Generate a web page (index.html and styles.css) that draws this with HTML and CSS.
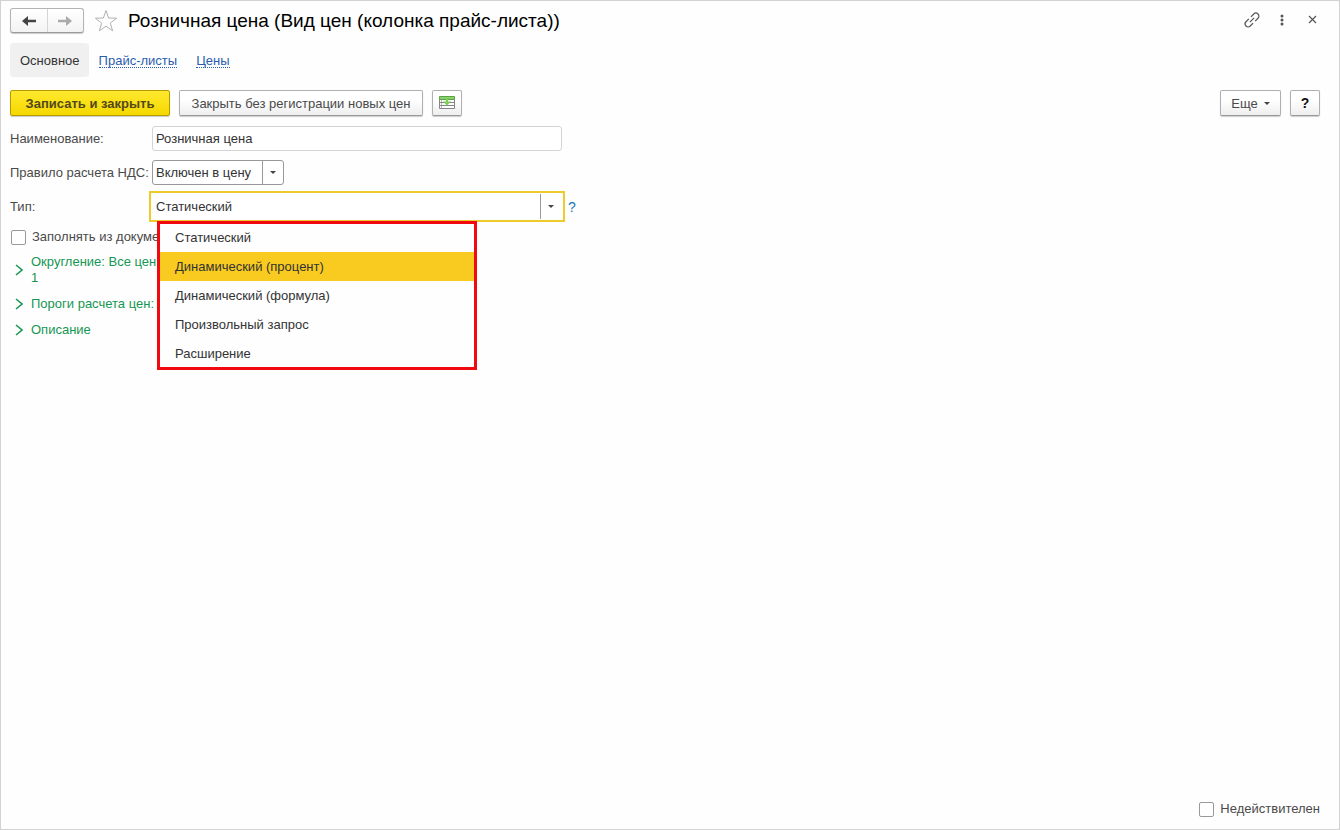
FILE: index.html
```html
<!DOCTYPE html>
<html lang="ru">
<head>
    <meta charset="UTF-8">
    <meta name="viewport" content="width=device-width, initial-scale=1.0">
    <title>Розничная цена (Вид цен (колонка прайс-листа))</title>
    <link rel="stylesheet" href="styles.css">
</head>
<body>
    <header class="titlebar">
        <div class="history">
            <button type="button" aria-label="Назад">
                <svg width="16" height="12" viewBox="0 0 16 12"><path d="M1 6l6-5v3.700h8v2.600H7V11z" fill="#444"/></svg>
            </button>
            <button type="button" aria-label="Вперед">
                <svg width="16" height="12" viewBox="0 0 16 12"><path d="M15 6L9 1v3.700H1v2.600h8V11z" fill="#aaa"/></svg>
            </button>
        </div>
        <button type="button" class="icon-button star" aria-label="Избранное">
            <svg width="24" height="23" viewBox="0 0 24 23"><path d="M12 1.500L14.600 9l8 .2-6.300 4.900 2.300 7.700-6.600-4.600-6.600 4.600 2.300-7.700L1.400 9.200l8-.2z" fill="none" stroke="#b0b0b0"/></svg>
        </button>
        <h1>Розничная цена (Вид цен (колонка прайс-листа))</h1>
        <div class="window-tools">
            <button type="button" class="icon-button" aria-label="Ссылка">
                <svg width="18" height="18" viewBox="-9 -9 18 18"><path transform="rotate(-45)" d="M-1.500-3H-5.500a3 3 0 0 0 0 6H-1.500M1.500-3H5.500a3 3 0 0 1 0 6H1.500M-3 0H3" fill="none" stroke="#555" stroke-width="1.200"/></svg>
            </button>
            <button type="button" class="icon-button" aria-label="Меню">
                <svg width="4" height="12" viewBox="0 0 4 12" fill="#555"><circle cx="2" cy="2" r="1.500"/><circle cx="2" cy="6" r="1.500"/><circle cx="2" cy="10" r="1.500"/></svg>
            </button>
            <button type="button" class="icon-button" aria-label="Закрыть">
                <svg width="9" height="9" viewBox="0 0 9 9"><path d="M1 1l7 7M8 1L1 8" stroke="#555" stroke-width="1.200"/></svg>
            </button>
        </div>
    </header>

    <nav class="tabs">
        <a href="#" class="current">Основное</a>
        <a href="#"><span>Прайс-листы</span></a>
        <a href="#"><span>Цены</span></a>
    </nav>

    <div class="toolbar">
        <button type="button" class="btn primary">Записать и закрыть</button>
        <button type="button" class="btn wide">Закрыть без регистрации новых цен</button>
        <button type="button" class="btn square" aria-label="Загрузить цены">
            <svg width="16" height="14" viewBox="0 0 16 14">
                <path d="M.5 3.500v9h15v-9M.5 6.500h15M.5 9.500h15" fill="#fff" stroke="#858585"/>
                <path d="M.5.5h15v3H.5z" fill="#8ccf6c" stroke="#5aa548"/>
                <path d="M2 5h1M2 8h1M2 11h1" stroke="#777"/>
                <path d="M7 2h2v3.500h3L8 9.500 4 5.500h3z" fill="#7bcf52"/>
            </svg>
        </button>
        <button type="button" class="btn more">Еще
            <svg width="6" height="3" viewBox="0 0 6 3"><path d="M0 0h6L3 3z" fill="#444"/></svg>
        </button>
        <button type="button" class="btn square help">?</button>
    </div>

    <form class="card">
        <div class="form-row">
            <label for="name">Наименование:</label>
            <input type="text" id="name" name="name" class="field" value="Розничная цена">
        </div>

        <div class="form-row">
            <label for="vat">Правило расчета НДС:</label>
            <div class="select-box">
                <select id="vat" name="vat">
                    <option>Включен в цену</option>
                    <option>Не включен в цену</option>
                </select>
                <span class="arrow"><svg width="6" height="3" viewBox="0 0 6 3"><path d="M0 0h6L3 3z" fill="#444"/></svg></span>
            </div>
        </div>

        <div class="form-row">
            <label for="type">Тип:</label>
            <div class="combo">
                <input type="text" id="type" name="type" role="combobox" aria-expanded="true" aria-controls="typeList" value="Статический">
                <button type="button" class="combo-button" aria-label="Выбрать">
                    <svg width="6" height="3" viewBox="0 0 6 3"><path d="M0 0h6L3 3z" fill="#444"/></svg>
                </button>
                <ul class="dropdown" id="typeList" role="listbox">
                    <li role="option">Статический</li>
                    <li role="option" class="selected" aria-selected="true">Динамический (процент)</li>
                    <li role="option">Динамический (формула)</li>
                    <li role="option">Произвольный запрос</li>
                    <li role="option">Расширение</li>
                </ul>
            </div>
            <a href="#" class="hint">?</a>
        </div>

        <div class="check-row">
            <input type="checkbox" id="fill" name="fill">
            <label for="fill">Заполнять из докуме</label>
        </div>

        <div class="groups">
            <button type="button" class="group">
                <svg width="8" height="12" viewBox="0 0 8 12"><path d="M1 1l6 5-6 5" fill="none" stroke="#159653" stroke-width="1.500"/></svg>
                <span>Округление: Все цен<br>1</span>
            </button>
            <button type="button" class="group">
                <svg width="8" height="12" viewBox="0 0 8 12"><path d="M1 1l6 5-6 5" fill="none" stroke="#159653" stroke-width="1.500"/></svg>
                <span>Пороги расчета цен:</span>
            </button>
            <button type="button" class="group">
                <svg width="8" height="12" viewBox="0 0 8 12"><path d="M1 1l6 5-6 5" fill="none" stroke="#159653" stroke-width="1.500"/></svg>
                <span>Описание</span>
            </button>
        </div>
    </form>

    <footer class="check-row footer">
        <input type="checkbox" id="inactive" name="inactive">
        <label for="inactive">Недействителен</label>
    </footer>
</body>
</html>
```

FILE: styles.css
```css
* {
    box-sizing: border-box;
}
body {
    display: flex;
    flex-direction: column;
    min-height: 100vh;
    margin: 0;
    padding: 7px 19px 12px 9px;
    border: 1px solid #d2d2d2;
    background: #fefefe;
    color: #4a4a4a;
    font: 13px/16px "Liberation Sans", Arial, sans-serif;
}
button, input, select {
    font: inherit;
    color: inherit;
}
button {
    padding: 0;
    cursor: pointer;
}
svg {
    display: block;
}

/* title */
.titlebar {
    display: flex;
    align-items: center;
    height: 25px;
}
.history {
    display: flex;
    width: 74px;
    height: 25px;
    border: 1px solid #b4b4b4;
    border-bottom-color: #999;
    border-radius: 3px;
    background: linear-gradient(#fff, #f3f3f3);
    box-shadow: 0 1px 1px #ccc;
}
.history button {
    display: flex;
    flex: 1;
    align-items: center;
    justify-content: center;
    border: none;
    background: none;
}
.history button + button {
    border-left: 1px solid #d5d5d5;
}
.icon-button {
    display: flex;
    align-items: center;
    justify-content: center;
    border: none;
    background: none;
}
.star {
    margin: 0 10px;
}
h1 {
    margin: 0;
    color: #000;
    font-size: 19px;
    font-weight: normal;
    line-height: 24px;
}
.window-tools {
    display: flex;
    align-self: flex-start;
    margin-left: auto;
    margin-right: -7px;
}
.window-tools button {
    width: 30px;
    height: 23px;
}

/* navigation */
.tabs {
    display: flex;
    margin-top: 10px;
}
.tabs a {
    padding: 10px 9px 8px 10px;
    border-radius: 4px;
    color: #2a5db0;
    text-decoration: none;
}
.tabs .current {
    background: #f0f0f0;
    color: #333;
}
.tabs span {
    display: block;
    height: 15px;
    border-bottom: 1px dotted #2a5db0;
}

/* commands */
.toolbar {
    display: flex;
    gap: 9px;
    margin-top: 13px;
}
.btn {
    height: 26px;
    padding-top: 1px;
    border: 1px solid #b0b0b0;
    border-bottom-color: #999;
    border-radius: 2px;
    background: linear-gradient(#fff 40%, #eee);
    box-shadow: 0 1px 1px #ccc;
}
.primary {
    width: 160px;
    border-color: #b59b00;
    background: linear-gradient(#ffe92e, #f5d800);
    color: #54491a;
    font-weight: bold;
}
.wide {
    width: 244px;
}
.square {
    display: flex;
    align-items: center;
    justify-content: center;
    width: 30px;
    padding-top: 0;
}
.more {
    display: flex;
    align-items: center;
    justify-content: center;
    gap: 6px;
    width: 61px;
    margin-left: auto;
}
.help {
    color: #111;
    font-size: 14px;
    font-weight: bold;
}

/* form */
.card {
    display: flex;
    flex-direction: column;
    gap: 9px;
    margin-top: 10px;
}
.form-row {
    display: flex;
    align-items: center;
}
.form-row > label {
    width: 142px;
    white-space: nowrap;
}
.field, .combo {
    width: 410px;
    height: 25px;
}
.field {
    padding: 0 3px;
    border: 1px solid #d4d4d8;
    border-radius: 3px;
    background: #fff;
    color: #333;
}
.select-box {
    position: relative;
    width: 132px;
    height: 25px;
}
.select-box select {
    width: 100%;
    height: 100%;
    padding: 0 22px 0 3px;
    border: 1px solid #999;
    border-radius: 3px;
    background: #fff;
    color: #333;
    appearance: none;
}
.select-box .arrow {
    position: absolute;
    top: 1px;
    right: 1px;
    bottom: 1px;
    display: flex;
    align-items: center;
    justify-content: center;
    width: 21px;
    border-left: 1px solid #999;
    pointer-events: none;
}
.combo {
    position: relative;
    display: flex;
    outline: 2px solid #eecb2b;
    outline-offset: 1px;
    background: #fff;
    color: #333;
}
.combo input {
    flex: 1;
    padding: 0 4px;
    border: none;
    outline: none;
    background: none;
}
.combo-button {
    display: flex;
    align-items: center;
    justify-content: center;
    width: 22px;
    padding-right: 2px;
    border: none;
    border-left: 1px solid #999;
    background: none;
}
.dropdown {
    position: absolute;
    z-index: 1;
    top: 29px;
    left: 7px;
    width: 316px;
    margin: 0;
    padding: 0;
    outline: 3px solid #f00a10;
    outline-offset: -1px;
    background: #fefefe;
    list-style: none;
}
.dropdown li {
    padding: 0 16px;
    line-height: 29px;
}
.dropdown .selected {
    background: #f9cb20;
}
.hint {
    margin-left: 6px;
    color: #1c78b4;
    font-size: 14px;
    text-decoration: none;
}
.check-row {
    display: flex;
    align-items: center;
    gap: 6px;
}
.card .check-row {
    margin-top: 1px;
}
.check-row input {
    width: 15px;
    height: 15px;
    margin: 0 0 0 1px;
    border: 1px solid #999;
    border-radius: 2px;
    background: #fff;
    appearance: none;
}
.groups {
    display: flex;
    flex-direction: column;
    align-items: flex-start;
    gap: 10px;
}
.group {
    display: flex;
    align-items: center;
    gap: 8px;
    padding-left: 5px;
    border: none;
    background: none;
    color: #159653;
    text-align: left;
}
.footer {
    justify-content: flex-end;
    margin-top: auto;
}
```
